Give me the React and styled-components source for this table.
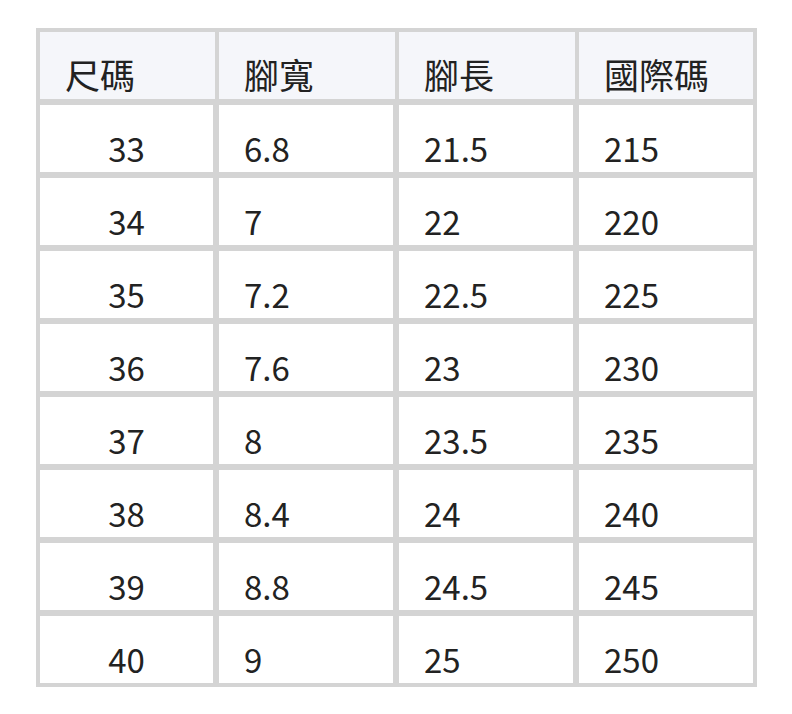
import React from "react";
import styled, { createGlobalStyle } from "styled-components";

const Global = createGlobalStyle`
  html, body { margin: 0; padding: 0; background: #ffffff; }
  body { font-family: "Noto Sans CJK TC", "Noto Sans", sans-serif; }
`;

const Page = styled.div`
  padding: 28px 0 0 36px;
`;

const Table = styled.table`
  border-collapse: separate;
  border-spacing: 0;
  table-layout: fixed;
  width: 721px;
  border: 4px solid #d4d4d4;
  color: #222222;
  font-size: 33px;
`;

const HeadCell = styled.th`
  background: #f5f6fa;
  font-weight: 400;
  font-size: 35px;
  text-align: left;
  vertical-align: bottom;
  padding: 19px 25px 2px 25px;
  line-height: 46px;
  border-bottom: 6px solid #d4d4d4;
  border-right: ${(p) => (p.$last ? "none" : "4px solid #d4d4d4")};
`;

const Cell = styled.td`
  background: #ffffff;
  text-align: ${(p) => (p.$center ? "center" : "left")};
  vertical-align: bottom;
  padding: 19px 25px 0 25px;
  line-height: 48px;
  border-bottom: ${(p) => (p.$lastRow ? "none" : "6px solid #d4d4d4")};
  border-right: ${(p) => (p.$last ? "none" : "6px solid #d4d4d4")};
`;

const headers = ["尺碼", "腳寬", "腳長", "國際碼"];
const rows = [
  ["33", "6.8", "21.5", "215"],
  ["34", "7", "22", "220"],
  ["35", "7.2", "22.5", "225"],
  ["36", "7.6", "23", "230"],
  ["37", "8", "23.5", "235"],
  ["38", "8.4", "24", "240"],
  ["39", "8.8", "24.5", "245"],
  ["40", "9", "25", "250"],
];
const widths = [179, 180, 180, 174];

export default function App() {
  return (
    <>
      <Global />
      <Page>
        <Table>
          <colgroup>
            {widths.map((w, i) => (
              <col key={i} style={{ width: w }} />
            ))}
          </colgroup>
          <thead>
            <tr>
              {headers.map((h, i) => (
                <HeadCell key={h} $last={i === headers.length - 1}>
                  {h}
                </HeadCell>
              ))}
            </tr>
          </thead>
          <tbody>
            {rows.map((r, ri) => (
              <tr key={ri}>
                {r.map((c, ci) => (
                  <Cell
                    key={ci}
                    $center={ci === 0}
                    $last={ci === r.length - 1}
                    $lastRow={ri === rows.length - 1}
                  >
                    {c}
                  </Cell>
                ))}
              </tr>
            ))}
          </tbody>
        </Table>
      </Page>
    </>
  );
}
